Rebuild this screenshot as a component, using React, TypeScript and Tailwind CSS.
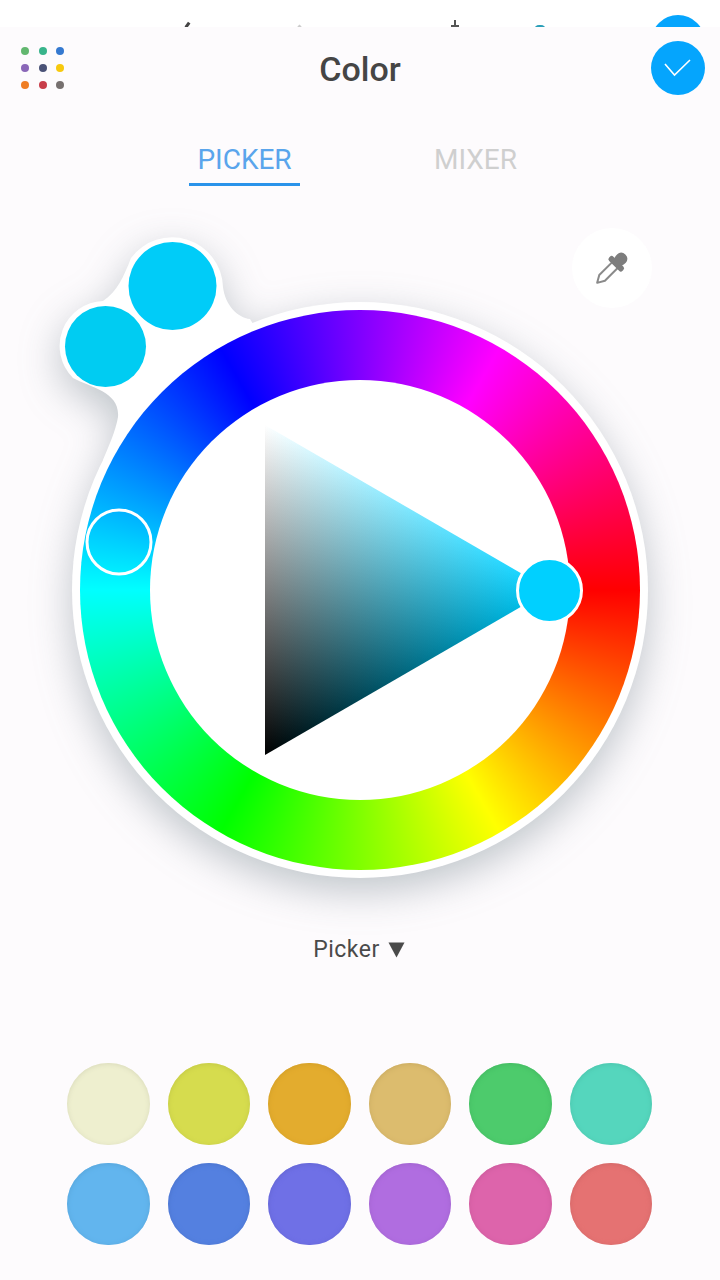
const font = "font-['Roboto','Liberation_Sans',sans-serif]";

const dots = ['#62b76f', '#38b48b', '#3579d0', '#8a67b8', '#4a5277', '#f7c90e', '#ef7d24', '#c83d4a', '#76706f'];
const swatches = [
  ['#eeefcf', '#d9dabb'], ['#d6dc4e', '#c3c947'], ['#e3ac2e', '#d29e28'], ['#dcbc6e', '#c9aa60'], ['#4dcb6c', '#43b861'], ['#55d6bd', '#4cc4ac'],
  ['#62b5ee', '#58a5da'], ['#5480e0', '#4b73cc'], ['#6f70e6', '#6465d2'], ['#b06de0', '#a063cd'], ['#dd64ab', '#ca5a9b'], ['#e57272', '#d16767'],
];

function Eyedropper() {
  return (
    <svg width="80" height="80" viewBox="0 0 80 80" fill="none">
      <g transform="translate(40 40) rotate(45)">
        <path d="M-4 -4 V14 L0 21 L4 14 V-4" stroke="#8a8a8a" strokeWidth="2" strokeLinejoin="round" fill="#fff" />
        <rect x="-9.5" y="-9" width="19" height="6" rx="2.5" fill="#7d7d7d" />
        <rect x="-6" y="-19" width="12" height="13" rx="5.5" fill="#7d7d7d" />
      </g>
    </svg>
  );
}

function Triangle() {
  return (
    <svg className="isolate blur-[0.5px]" width="420" height="420" viewBox="150 380 420 420">
      <defs>
        <linearGradient id="w" gradientUnits="userSpaceOnUse" x1="408.1" y1="672.15" x2="265" y2="425">
          <stop offset="0" stopColor="#000" />
          <stop offset="1" stopColor="#fff" />
        </linearGradient>
        <linearGradient id="c" gradientUnits="userSpaceOnUse" x1="265" y1="590" x2="550" y2="590">
          <stop offset="0" stopColor="#000" />
          <stop offset="1" stopColor="#00d0ff" />
        </linearGradient>
        <clipPath id="tri">
          <polygon points="265,425 265,755 550,590" />
        </clipPath>
      </defs>
      <g clipPath="url(#tri)" className="isolate">
        <rect x="150" y="380" width="420" height="420" fill="url(#w)" />
        <rect x="150" y="380" width="420" height="420" fill="url(#c)" className="mix-blend-plus-lighter" />
      </g>
    </svg>
  );
}

function Wheel() {
  return (
    <div className="relative h-[719px] w-[720px]">
      <div className="h-full pt-[116px] drop-shadow-[0_13px_20px_rgba(80,100,110,0.36)]">
        {/* metaball holding the previous and current colour */}
        <svg className="absolute left-0 top-0" width="720" height="400" viewBox="0 186 720 400">
          <path
            d="M300 400 L250 319 C238 318 225 305 223 287 A51 51 0 0 0 131 258 C124 276 117 292 103 301 A45 45 0 0 0 73 378 C92 388 120 392 118 417 C116 430 108 448 103 460 Z"
            fill="#fff"
          />
        </svg>
        <div className="relative mx-auto flex h-[576px] w-[576px] items-center justify-center rounded-full bg-white">
          <div className="flex h-[560px] w-[560px] items-center justify-center rounded-full bg-[conic-gradient(from_90deg,#ff0000,#ffff00,#00ff00,#00ffff,#0000ff,#ff00ff,#ff0000)]">
            <div className="h-[420px] w-[420px] rounded-full bg-white">
              <Triangle />
            </div>
          </div>
        </div>
      </div>

      {/* swatches and handles drawn over the wheel */}
      <svg className="absolute inset-0" width="720" height="719" viewBox="0 186 720 719">
        <circle cx="172.500" cy="286" r="44" fill="#00ccf8" />
        <circle cx="105.500" cy="346.500" r="40.500" fill="#00ccf2" />
        <circle cx="549.500" cy="590.500" r="32" fill="#00d0ff" stroke="#fff" strokeWidth="3" />
        <circle cx="119" cy="542" r="32" fill="none" stroke="#fff" strokeWidth="3" />
      </svg>

      <div className="absolute right-[68px] top-[42px] rounded-full bg-white">
        <Eyedropper />
      </div>
    </div>
  );
}

export default function App() {
  return (
    <div className={`${font} h-[1280px] w-[720px] overflow-hidden bg-white`}>
      <div className="relative h-[27px] overflow-hidden bg-white">
        <span className="absolute left-[186px] top-[22px] h-[6px] w-[3px] rotate-[35deg] bg-[#444]" />
        <span className="absolute left-[298px] top-[25px] h-[3px] w-[3px] rotate-45 bg-[#ccc]" />
        <span className="absolute left-[454px] top-[20px] h-[8px] w-[2px] bg-[#555]" />
        <span className="absolute left-[451px] top-[25px] h-[2px] w-[8px] bg-[#555]" />
        <span className="absolute left-[534px] top-[25px] h-[10px] w-[12px] rounded-full bg-[#2a9fb8]" />
        <span className="absolute left-[651px] top-[15px] h-[54px] w-[54px] rounded-full bg-[#05a5fd]" />
      </div>

      <div className="h-[1253px] bg-[#fdfbfd]">
        <header className="grid h-[84px] grid-cols-[1fr_auto_1fr] items-center pl-[21px] pr-[15px]">
          <div className="mb-[2px] grid w-fit grid-cols-3 gap-x-[9.5px] gap-y-[9px]">
            {dots.map((c) => (
              <span key={c} className="h-2 w-2 rounded-full" style={{ backgroundColor: c }} />
            ))}
          </div>
          <h1 className="-ml-[6px] text-[34px] font-medium leading-none text-[#454545]">Color</h1>
          <button className="mb-[2px] flex h-[54px] w-[54px] items-center justify-center justify-self-end rounded-full bg-[#05a5fd]">
            <svg width="30" height="20" viewBox="0 0 30 20" fill="none">
              <path d="M2 6 L11.500 17 L27 2" stroke="#fff" strokeWidth="1.6" />
            </svg>
          </button>
        </header>

        <nav className="mx-auto grid h-[75px] w-[462px] grid-cols-2 justify-items-center">
          <div className="flex h-full w-[111px] items-end justify-center border-b-[3px] border-[#2a93ea] pb-[9px] text-[28px] leading-none text-[#5aa5ec]">
            PICKER
          </div>
          <div className="flex h-full w-[111px] items-end justify-center border-b-[3px] border-transparent pb-[9px] text-[28px] leading-none text-[#cfcfcf]">
            MIXER
          </div>
        </nav>

        <Wheel />

        <div className="mt-[20px] flex h-[50px] items-center justify-center gap-2 pr-[2px] text-[23px] tracking-[0.5px] text-[#4a4a4a]">
          <span>Picker</span>
          <svg width="17" height="16" viewBox="0 0 17 16">
            <path d="M0.500 0.500 H16.500 L8.500 15.500 Z" fill="#4a4a4a" />
          </svg>
        </div>

        <div className="mt-[88px] grid w-fit grid-cols-[repeat(6,82.500px)] gap-x-[18px] gap-y-[18px] pl-[67px]">
          {swatches.map(([bg, edge]) => (
            <div
              key={bg}
              className="h-[82px] rounded-full"
              style={{ backgroundColor: bg, boxShadow: `inset 0 1px 5px ${edge}` }}
            />
          ))}
        </div>
      </div>
    </div>
  );
}
